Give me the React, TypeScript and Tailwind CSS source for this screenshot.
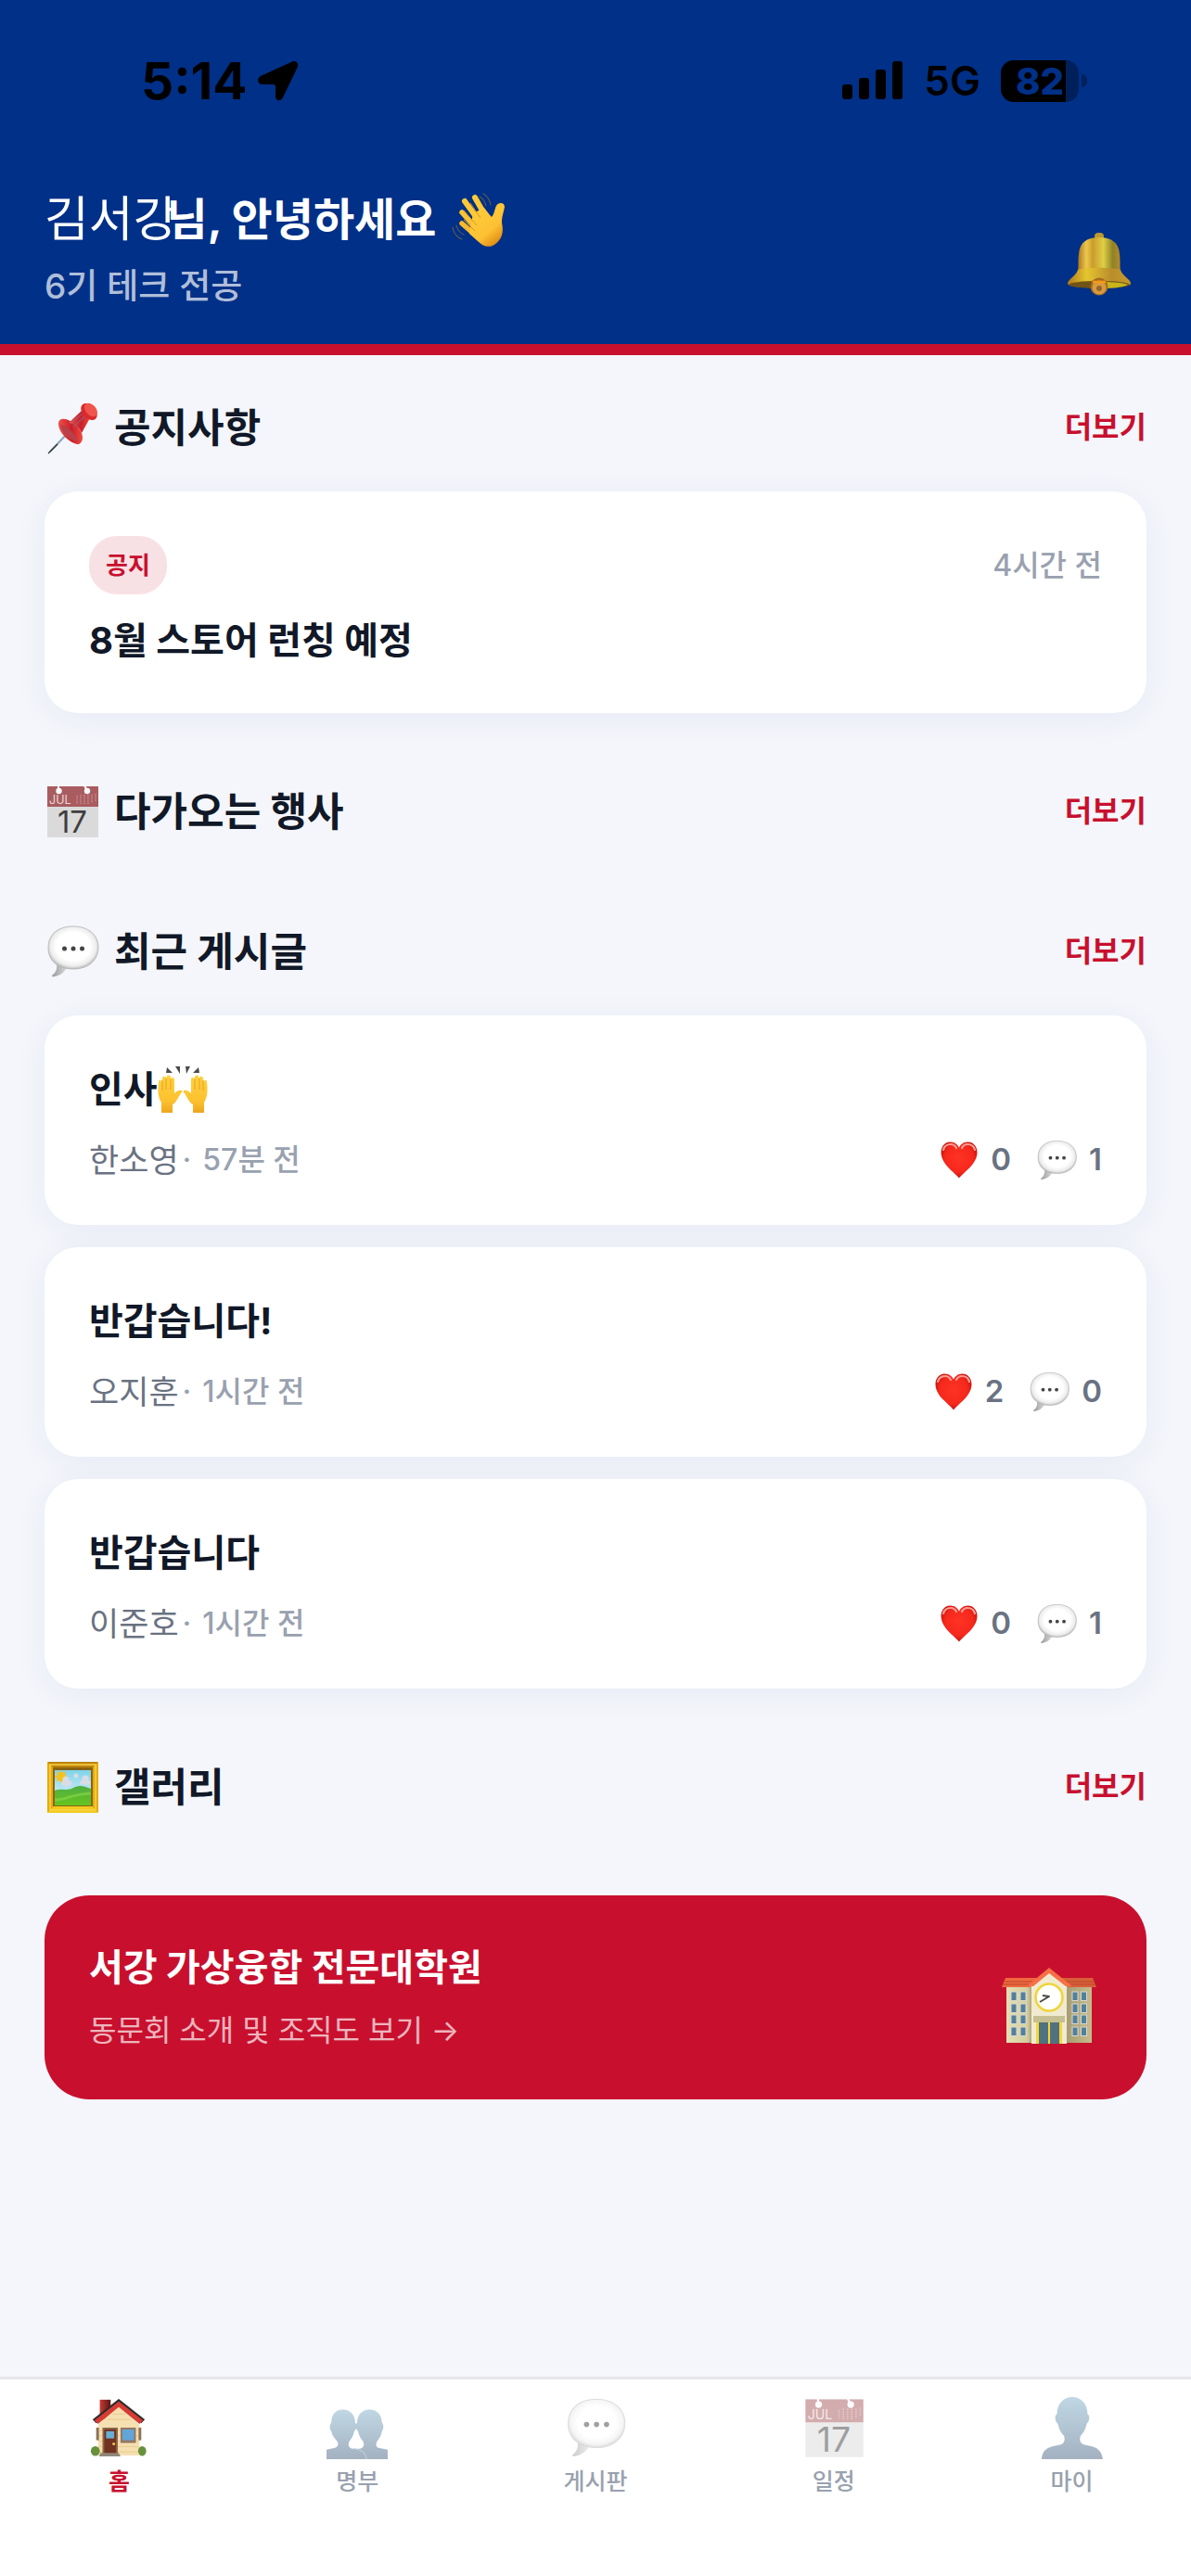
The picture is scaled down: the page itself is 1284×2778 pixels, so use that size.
import React from 'react';

type IconProps = { className?: string };

type Post = {
    id: number;
    title: string;
    raisedHands?: boolean;
    author: string;
    time: string;
    likes: number;
    comments: number;
};

const posts: Post[] = [
    { id: 1, title: '인사', raisedHands: true, author: '한소영', time: '57분 전', likes: 0, comments: 1 },
    { id: 2, title: '반갑습니다!', author: '오지훈', time: '1시간 전', likes: 2, comments: 0 },
    { id: 3, title: '반갑습니다', author: '이준호', time: '1시간 전', likes: 0, comments: 1 },
];

const WaveIcon: React.FC<IconProps> = ({ className }) => (
    <svg viewBox="0 0 60 60" className={className} aria-hidden="true">
        <defs>
            <linearGradient id="wave-skin" x1="0" y1="0" x2="0.7" y2="1">
                <stop offset="0" stopColor="#ffcf3d" />
                <stop offset="0.7" stopColor="#fdc134" />
                <stop offset="1" stopColor="#e08a12" />
            </linearGradient>
        </defs>
        <g strokeLinecap="round" fill="none">
            <path d="M26 6 38 27" stroke="#fcc938" strokeWidth="6" />
            <path d="M15 10 31 32" stroke="#fcc938" strokeWidth="6" />
            <path d="M12 22 27 39" stroke="#fbc333" strokeWidth="5.500" />
            <path d="M12 34 26 46" stroke="#f8b92c" strokeWidth="5.500" />
        </g>
        <path
            d="M24 23 36 17c3 4 6 8 8 10 3-3 3-8 5-12 2-4 9-4 9 1-1 6-3 10-3 17 2 9 1 18-8 24-7 4-13 1-18-4l-9-8Z"
            fill="url(#wave-skin)"
        />
        <path d="m21 12 11 16M14 20l14 16M14 30l12 12" stroke="#df9519" strokeWidth="1" fill="none" />
        <path d="M35 2c4 2 7 7 8 12M31 5c4 2 6 6 7 10M2 38c1 6 5 11 10 13M6 36c1 5 4 8 8 10" stroke="#5f5b50" strokeWidth="1.200" fill="none" strokeLinecap="round" />
    </svg>
);

const BellIcon: React.FC<IconProps> = ({ className }) => (
    <svg viewBox="0 0 70 70" className={className} aria-hidden="true">
        <defs>
            <linearGradient id="bell-body" x1="0" x2="1">
                <stop offset="0" stopColor="#a9731c" />
                <stop offset="0.2" stopColor="#ecc84e" />
                <stop offset="0.35" stopColor="#c99c2b" />
                <stop offset="0.6" stopColor="#dfcf45" />
                <stop offset="0.82" stopColor="#8f8126" />
                <stop offset="1" stopColor="#b98c26" />
            </linearGradient>
            <linearGradient id="bell-rim" x1="0" x2="1">
                <stop offset="0" stopColor="#b07a1c" />
                <stop offset="0.3" stopColor="#e5c52f" />
                <stop offset="0.7" stopColor="#b88d2c" />
                <stop offset="1" stopColor="#c99b28" />
            </linearGradient>
        </defs>
        <rect x="30" y="1" width="10" height="8" rx="4" fill="#bd982f" />
        <path d="M13 24C14 11 22 6 35 6s21 5 22 18c1 9 0 13 1 18l-23 6-23-6c1-5 0-10 1-18Z" fill="url(#bell-body)" />
        <path d="M12 41c7-3 39-3 46 0 2 7 11 10 11 15 0 6-68 6-68 0 0-5 9-8 11-15Z" fill="url(#bell-rim)" />
        <ellipse cx="35" cy="57" rx="33" ry="4" fill="#705316" />
        <path d="M38 54c12 0 24 1 28 3-6 3-17 4-28 4Z" fill="#c6b51c" />
        <circle cx="35" cy="59" r="9.500" fill="#a56c20" />
        <circle cx="35" cy="60" r="7.500" fill="#d99a40" />
        <path d="M28 54h14" stroke="#f49a17" strokeWidth="2.500" />
        <circle cx="35" cy="61" r="3" fill="#96672d" />
    </svg>
);

const PinIcon: React.FC<IconProps> = ({ className }) => (
    <svg viewBox="0 0 60 60" className={className} aria-hidden="true">
        <defs>
            <linearGradient id="pin-red" x1="0" x2="1">
                <stop offset="0" stopColor="#ee5048" />
                <stop offset="0.55" stopColor="#c9202b" />
                <stop offset="1" stopColor="#f04a40" />
            </linearGradient>
        </defs>
        <path d="M26 35 6 56" stroke="#88a9bb" strokeWidth="2.200" />
        <path d="M14 48 4 58" stroke="#33302f" strokeWidth="1.300" />
        <path d="M15 26c0-6 7-7 14-2 9 6 12 12 12 17 0 4-3 8-6 7-9-2-20-13-20-22Z" fill="url(#pin-red)" />
        <path d="M17 27c6 1 16 9 19 18-9-1-17-9-19-18Z" fill="#b7404a" />
        <path d="m26 25 15-14 9 7-10 18c-2-6-7-9-14-11Z" fill="url(#pin-red)" />
        <path d="m28 26 13-11M31 30l13-13" stroke="#8d6a8e" strokeWidth="1.300" opacity="0.6" />
        <ellipse cx="48" cy="13" rx="10.500" ry="7" fill="#d92a2c" transform="rotate(48 48 13)" />
        <ellipse cx="50" cy="11" rx="8.500" ry="5.500" fill="#f0554b" transform="rotate(48 50 11)" />
    </svg>
);

const CalendarIcon: React.FC<IconProps> = ({ className }) => (
    <svg viewBox="0 0 60 60" className={className} aria-hidden="true">
        <path d="M3 3h55v55H3Z" fill="#dadada" />
        <path d="M3 3h55v22H3Z" fill="#a95c60" />
        <path d="M15 0v8M42 0l4 8" stroke="#f8f9fb" strokeWidth="2" />
        <circle cx="15.500" cy="8" r="3.200" fill="#f8f9fb" />
        <circle cx="46" cy="8" r="3.200" fill="#f8f9fb" />
        <path d="M35 13v9M39 12v10M43 12v10M47 12v10M51 12v9M55 11v8" stroke="#cc9294" strokeWidth="1.500" strokeDasharray="1.200 1" />
        <text x="5" y="22" fontSize="12.500" fontWeight="400" fill="#ead7d8" fontFamily="Inter">JUL</text>
        <text x="30" y="53" fontSize="33" fontWeight="400" fill="#3f3f3f" fontFamily="Inter" textAnchor="middle">17</text>
    </svg>
);

const BubbleIcon: React.FC<IconProps> = ({ className }) => (
    <svg viewBox="0 0 60 60" className={className} aria-hidden="true">
        <defs>
            <radialGradient id="bubble-fill" cx="0.5" cy="0.47" r="0.56">
                <stop offset="0.6" stopColor="#ffffff" />
                <stop offset="0.82" stopColor="#ededed" />
                <stop offset="1" stopColor="#a9a9a9" />
            </radialGradient>
            <linearGradient id="bubble-tail" x1="0" x2="1">
                <stop offset="0" stopColor="#9b9b9b" />
                <stop offset="1" stopColor="#dddddd" />
            </linearGradient>
        </defs>
        <path d="M13 43c1 6-1 10-5 13 0 1 1 2 3 1 6-1 11-5 14-11Z" fill="url(#bubble-tail)" />
        <path d="M31 3C47 3 58 12 58 25.500S48 49 31 49 4 40 4 26 14 3 31 3Z" fill="url(#bubble-fill)" stroke="#b4b4b4" strokeWidth="0.800" />
        <g fill="#444444">
            <circle cx="21.500" cy="27" r="2.500" />
            <circle cx="31" cy="27" r="2.500" />
            <circle cx="40.500" cy="27" r="2.500" />
        </g>
    </svg>
);

const FrameIcon: React.FC<IconProps> = ({ className }) => (
    <svg viewBox="0 0 60 60" className={className} aria-hidden="true">
        <defs>
            <linearGradient id="frame-sky" x1="0" y1="0" x2="0" y2="1">
                <stop offset="0" stopColor="#7fd4ea" />
                <stop offset="1" stopColor="#eaf6fb" />
            </linearGradient>
            <linearGradient id="frame-hill" x1="0" y1="0" x2="0" y2="1">
                <stop offset="0" stopColor="#4fae45" />
                <stop offset="1" stopColor="#66c41d" />
            </linearGradient>
        </defs>
        <rect x="3" y="3" width="55" height="55" rx="1" fill="#e5ab10" />
        <path d="M3 3h55l-8 8H11Z" fill="#bd850c" />
        <path d="m3 58 8-8h39l8 8Z" fill="#f2cb1f" />
        <rect x="6" y="6" width="49" height="49" fill="none" stroke="#f7d445" strokeWidth="1.500" />
        <rect x="9" y="9" width="43" height="42" fill="#8a6414" />
        <rect x="11" y="12" width="39" height="38" fill="url(#frame-sky)" />
        <path d="M11 34c7-3 13 1 20-3 8-4 13-1 19 1v18H11Z" fill="url(#frame-hill)" />
        <path d="M11 44c12 0 18-6 39-7" stroke="#8bd84d" strokeWidth="3" fill="none" opacity="0.6" />
        <circle cx="18" cy="19" r="5" fill="#f4c21c" />
        <path d="M18 12v14M11 19h14M13 14l10 10M23 14 13 24" stroke="#f4c21c" strokeWidth="1.300" />
        <g fill="#d7dce6">
            <ellipse cx="24" cy="26" rx="6" ry="3.500" />
            <circle cx="23" cy="22" r="3.500" />
            <ellipse cx="44" cy="25" rx="6" ry="3" />
            <circle cx="44" cy="21" r="3.500" />
            <circle cx="34" cy="18" r="2.500" />
        </g>
    </svg>
);

const RaisedHandsIcon: React.FC<IconProps> = ({ className }) => (
    <svg viewBox="0 0 54 52" className={className} aria-hidden="true">
        <defs>
            <linearGradient id="hands-skin" x1="0" y1="0" x2="0" y2="1">
                <stop offset="0" stopColor="#ffd23f" />
                <stop offset="0.7" stopColor="#fcc02e" />
                <stop offset="1" stopColor="#eda51e" />
            </linearGradient>
            <g id="raised-hand">
                <path
                    d="M4 51V40C0 34 0 25 1 18c0-3 3-3 3 0l1-4c0-3 4-3 4 0l1-2c0-2 4-2 4 1l1 1c1-2 3-1 3 1v15c3-3 6-4 8-3 1 1 0 2-1 3-4 6-5 10-9 12v9Z"
                    fill="url(#hands-skin)"
                />
                <path d="M5 27V16M9 26V14M14 26V15" stroke="#e49b1b" strokeWidth="0.900" />
            </g>
        </defs>
        <use href="#raised-hand" />
        <use href="#raised-hand" transform="matrix(-1 0 0 1 54 0)" />
        <path d="m9 8 1-6 6 6ZM19 1h5v8ZM30 1h5l-4 8ZM38 8l6-6 1 6Z" fill="#4b4b4b" />
    </svg>
);

const HeartIcon: React.FC<IconProps> = ({ className }) => (
    <svg viewBox="0 0 40 40" className={className} aria-hidden="true">
        <defs>
            <radialGradient id="heart-fill" cx="0.5" cy="0.45" r="0.6">
                <stop offset="0" stopColor="#ff3324" />
                <stop offset="0.65" stopColor="#f5281c" />
                <stop offset="1" stopColor="#b30f0a" />
            </radialGradient>
        </defs>
        <path d="M20 39.500C15 33 1 25 0.500 12 0.500 5 5 0.500 10.500 0.500c5 0 8 3 9.500 6 1.500-3 4.500-6 9.500-6C35 0.500 39.500 5 39.500 12 39 25 25 33 20 39.500Z" fill="url(#heart-fill)" />
        <path d="M3 9c1-4 4-6 8-6 3 0 5 2 6 4M23 7c1-2 3-4 6-4 4 0 7 2 8 6" stroke="#ff9c92" strokeWidth="2.200" fill="none" strokeLinecap="round" />
    </svg>
);

const SchoolIcon: React.FC<IconProps> = ({ className }) => (
    <svg viewBox="0 0 102 84" className={className} aria-hidden="true">
        <defs>
            <linearGradient id="school-left" x1="0" x2="1">
                <stop offset="0" stopColor="#e5dfb3" />
                <stop offset="0.8" stopColor="#d5cea0" />
                <stop offset="1" stopColor="#a59e77" />
            </linearGradient>
            <linearGradient id="school-right" x1="0" x2="1">
                <stop offset="0" stopColor="#a69c74" />
                <stop offset="1" stopColor="#c6bc8c" />
            </linearGradient>
        </defs>
        <path d="M5 18h28v63H5Z" fill="url(#school-left)" />
        <path d="M69 18h28v63H69Z" fill="url(#school-right)" />
        <path d="M4 11h36L31 21H0Z" fill="#f0693f" />
        <path d="M62 11h36l4 10H72Z" fill="#d95f38" />
        <path d="M3 15h32M1 18h32M66 15h34M70 18h31" stroke="#b9492b" strokeWidth="1" />
        <path d="M32 18 51 5l19 13v64H32Z" fill="#f0ebd0" />
        <path d="M51 0 76 20h-7L51 6 34 20h-7Z" fill="#f76f47" />
        <g fill="#527f9c" stroke="#d8dad3" strokeWidth="1">
            {[26, 39, 51, 64].map((y) => (
                <React.Fragment key={y}>
                    <rect x="10" y={y} width="6" height="9.500" />
                    <rect x="20" y={y} width="6" height="9.500" />
                    <rect x="76" y={y} width="6" height="9.500" />
                    <rect x="85.500" y={y} width="6" height="9.500" />
                </React.Fragment>
            ))}
        </g>
        <circle cx="51" cy="32" r="14.500" fill="#ffffff" stroke="#f0d43b" strokeWidth="2.500" />
        <path d="m41 37 10-6-7-1" stroke="#4d4a43" strokeWidth="2" fill="none" strokeLinejoin="round" />
        <rect x="34" y="52" width="34" height="7" fill="#c5bf91" />
        <path d="M37 59h28v23H37Z" fill="#f4d73c" />
        <path d="M40 59h10v23H40ZM52 59h10v23H52Z" fill="#50717f" />
    </svg>
);

const HouseIcon: React.FC<IconProps> = ({ className }) => (
    <svg viewBox="-2 -1 70 68" className={className} aria-hidden="true">
        <defs>
            <linearGradient id="chimney" x1="0" x2="1">
                <stop offset="0" stopColor="#c73b33" />
                <stop offset="1" stopColor="#5c1512" />
            </linearGradient>
        </defs>
        <rect x="12" y="2" width="12" height="22" fill="url(#chimney)" />
        <path d="M10 30 33 8l23 22v34H10Z" fill="#f6dfb0" />
        <path d="M11 36h44M11 42h44M11 48h44M11 54h44M11 60h44M20 24h26M26 18h14" stroke="#e5c68b" strokeWidth="0.800" />
        <path d="M33 1 62 24l-4 4L33 8 8 28l-4-4Z" fill="#2c2b2c" />
        <path d="M33 4 60 25l-4 4L33 10 10 29l-4-4Z" fill="#d63c34" />
        <rect x="8" y="33" width="3" height="14" fill="#8c7256" />
        <rect x="55" y="33" width="3" height="14" fill="#8c7256" />
        <rect x="15" y="33" width="17" height="29" fill="#8b664c" />
        <rect x="17" y="35" width="13" height="27" fill="#71321f" />
        <rect x="19" y="37" width="9" height="8" fill="#69aed5" />
        <circle cx="27.500" cy="51" r="1.600" fill="#f1c453" />
        <rect x="35" y="33" width="17" height="17" fill="#937760" />
        <rect x="37" y="35" width="13" height="12" fill="#62a5d8" />
        <path d="M13 61h20l2 4H11Z" fill="#8f8779" />
        <ellipse cx="7" cy="59" rx="5" ry="5.500" fill="#68913c" />
        <ellipse cx="59" cy="59" rx="4.500" ry="5.500" fill="#68913c" />
    </svg>
);

const PersonIcon: React.FC<IconProps> = ({ className }) => (
    <svg viewBox="0 0 66 66" className={className} aria-hidden="true">
        <defs>
            <linearGradient id="person-fill" x1="0" y1="0" x2="0" y2="1">
                <stop offset="0" stopColor="#83b0ca" />
                <stop offset="1" stopColor="#4a6685" />
            </linearGradient>
        </defs>
        <path
            d="M33 1c10 0 16 8 16 18 3 1 2 8-1 10-1 6-4 10-6 12-2 4-1 9 4 10 10 2 17 3 19 15H1c1-12 9-13 19-15 5-1 6-6 4-10-2-2-5-6-6-12-3-2-4-9-1-10C17 9 23 1 33 1Z"
            fill="url(#person-fill)"
        />
    </svg>
);

const PeopleIcon: React.FC<IconProps> = ({ className }) => (
    <svg viewBox="0 0 66 66" className={className} aria-hidden="true">
        <defs>
            <linearGradient id="people-fill" x1="0" y1="0" x2="0" y2="1">
                <stop offset="0" stopColor="#83b0ca" />
                <stop offset="1" stopColor="#4a6685" />
            </linearGradient>
        </defs>
        <path
            d="M18 14c8 0 13 6 13 14 2 2 2 6-1 9-1 5-3 8-5 10-2 4-1 7 3 8h8c4-1 5-4 3-8-2-2-4-5-5-10-3-3-3-7-1-9 0-8 5-14 13-14s13 6 13 14c2 2 2 6 0 9-1 5-3 8-5 10-2 4-1 6 1 7l10 2v10H1V56l9-2c3-1 4-4 2-7-2-2-5-5-6-10-2-3-2-7 0-9 0-8 4-14 12-14Z"
            fill="url(#people-fill)"
        />
        <path d="M29 55c8 1 12 3 14 11" stroke="#7fa9c4" strokeWidth="1" fill="none" />
    </svg>
);

const StatusBar: React.FC = () => (
    <div className="flex h-[174px] items-center justify-between pr-[112px] pl-[152px] text-black">
        <div className="flex items-center gap-3">
            <span className="text-[55px] leading-[60px] font-bold">5:14</span>
            <svg viewBox="0 0 44 44" className="size-11" aria-hidden="true">
                <path d="M37 1.500 3 17c-5 3-3 9 2 9h12c1 0 2 1 2 2v11c0 5 6 6 8 1L43 7c1-4-2-7-6-5.500Z" />
            </svg>
        </div>
        <div className="flex items-center gap-[22px]">
            <svg viewBox="0 0 66 42" className="h-[42px] w-[66px]" aria-hidden="true">
                <rect x="0" y="25" width="11" height="16" rx="3" />
                <rect x="18" y="18" width="11" height="23" rx="3" />
                <rect x="36" y="9" width="11" height="32" rx="3" />
                <rect x="54" y="0" width="11" height="41" rx="3" />
            </svg>
            <span className="text-[44px] leading-[60px] font-semibold">5G</span>
            <div className="flex items-center gap-[3px]">
                <div className="flex h-[45px] w-[84px] rounded-[14px] bg-[#00205b]">
                    <div className="flex w-[70px] items-center justify-end rounded-l-[14px] bg-black pr-[2px] text-[40px] leading-[45px] font-extrabold text-[#003087]">82</div>
                </div>
                <div className="h-[14px] w-[6px] rounded-r-full bg-[#00205b]" />
            </div>
        </div>
    </div>
);

const SectionHeader: React.FC<{ icon: React.ReactNode; title: string }> = ({ icon, title }) => (
    <div className="mb-[39px] flex h-[60px] items-center justify-between">
        <h2 className="flex items-center gap-[15px] text-[43px] leading-[60px] font-bold text-[#111827]">
            {icon}
            {title}
        </h2>
        <a href="#" className="text-[32px] leading-[44px] font-bold text-[#c8102e]">더보기</a>
    </div>
);

const PostCard: React.FC<{ post: Post }> = ({ post }) => (
    <article className="mb-6 rounded-[36px] bg-white px-12 pt-[50px] pb-[46px] shadow-[0_6px_36px_rgba(0,48,135,0.06)]">
        <h3 className="flex h-[60px] items-center text-[40px] leading-[60px] font-bold text-[#111827]">
            {post.title}
            {post.raisedHands && <RaisedHandsIcon className="h-[52px] w-[54px]" />}
        </h3>
        <div className="mt-[22px] flex h-12 items-center justify-between">
            <p className="flex items-center text-[32px] font-medium text-gray-400">
                <span className="text-[35px] font-normal text-gray-500">{post.author}</span>
                <span className="mr-3 ml-1">·</span>
                <span>{post.time}</span>
            </p>
            <div className="flex items-center gap-[26px] text-[33px] font-semibold text-gray-500">
                <span className="flex items-center gap-[14px]">
                    <HeartIcon className="size-10" />
                    {post.likes}
                </span>
                <span className="flex items-center gap-3">
                    <BubbleIcon className="size-[46px]" />
                    {post.comments}
                </span>
            </div>
        </div>
    </article>
);

const tabs = [
    { label: '홈', Icon: HouseIcon, active: true },
    { label: '명부', Icon: PeopleIcon, active: false },
    { label: '게시판', Icon: BubbleIcon, active: false },
    { label: '일정', Icon: CalendarIcon, active: false },
    { label: '마이', Icon: PersonIcon, active: false },
];

const App: React.FC = () => {
    return (
        <div className="flex min-h-screen flex-col bg-[#f4f6fb] font-['Inter','Noto_Sans_CJK_KR',sans-serif]">
            <header className="border-b-[12px] border-[#c8102e] bg-[#003087]">
                <StatusBar />
                <div className="flex items-end justify-between px-12 pt-7 pb-[35px]">
                    <div>
                        <h1 className="flex h-[70px] items-center text-[48px] leading-[70px] font-bold text-white">
                            <span className="text-[52px] font-normal">김서강</span>
                            <span className="-ml-3">님, 안녕하세요</span>
                            <WaveIcon className="ml-4 size-[60px]" />
                        </h1>
                        <p className="mt-[10px] text-[37px] leading-[54px] font-medium text-white/70">6기 테크 전공</p>
                    </div>
                    <button type="button" aria-label="알림" className="flex size-[102px] items-center justify-center">
                        <BellIcon className="size-[70px]" />
                    </button>
                </div>
            </header>

            <main className="flex-1 px-12 pt-12">
                <section className="pb-[52px]">
                    <SectionHeader icon={<PinIcon className="size-[60px]" />} title="공지사항" />
                    <article className="mb-6 rounded-[36px] bg-white p-12 shadow-[0_6px_36px_rgba(0,48,135,0.06)]">
                        <div className="flex items-center justify-between">
                            <span className="rounded-[30px] bg-[#f8e1e5] px-[18px] text-[26px] leading-[63px] font-bold text-[#c8102e]">공지</span>
                            <span className="text-[32px] leading-[48px] font-medium text-gray-400">4시간 전</span>
                        </div>
                        <h3 className="mt-5 text-[40px] leading-[60px] font-bold text-[#111827]">8월 스토어 런칭 예정</h3>
                    </article>
                </section>

                <section className="pb-3">
                    <SectionHeader icon={<CalendarIcon className="size-[60px]" />} title="다가오는 행사" />
                </section>

                <section className="pt-10 pb-[52px]">
                    <SectionHeader icon={<BubbleIcon className="size-[60px]" />} title="최근 게시글" />
                    {posts.map((post) => (
                        <PostCard key={post.id} post={post} />
                    ))}
                </section>

                <section className="pb-12">
                    <SectionHeader icon={<FrameIcon className="size-[60px]" />} title="갤러리" />
                </section>

                <a href="#" className="flex items-center justify-between rounded-[48px] bg-[#c8102e] px-12 py-12 text-white">
                    <span className="flex flex-col gap-3">
                        <span className="text-[40px] leading-[60px] font-bold">서강 가상융합 전문대학원</span>
                        <span className="text-[32px] leading-[52px] text-white/70">동문회 소개 및 조직도 보기 →</span>
                    </span>
                    <SchoolIcon className="mt-5 mr-[6px] h-[84px] w-[102px]" />
                </a>
            </main>

            <nav className="flex h-[215px] border-t-[3px] border-gray-200 bg-white pt-[18px]">
                {tabs.map(({ label, Icon, active }) => (
                    <button
                        key={label}
                        type="button"
                        className={`flex flex-1 flex-col items-center text-[25px] leading-9 ${active ? 'font-bold text-[#c8102e]' : 'font-medium text-gray-400'}`}>
                        <Icon className={`mb-[6px] size-[68px] ${active ? '' : 'opacity-50'}`} />
                        {label}
                    </button>
                ))}
            </nav>
        </div>
    );
};

export default App;
